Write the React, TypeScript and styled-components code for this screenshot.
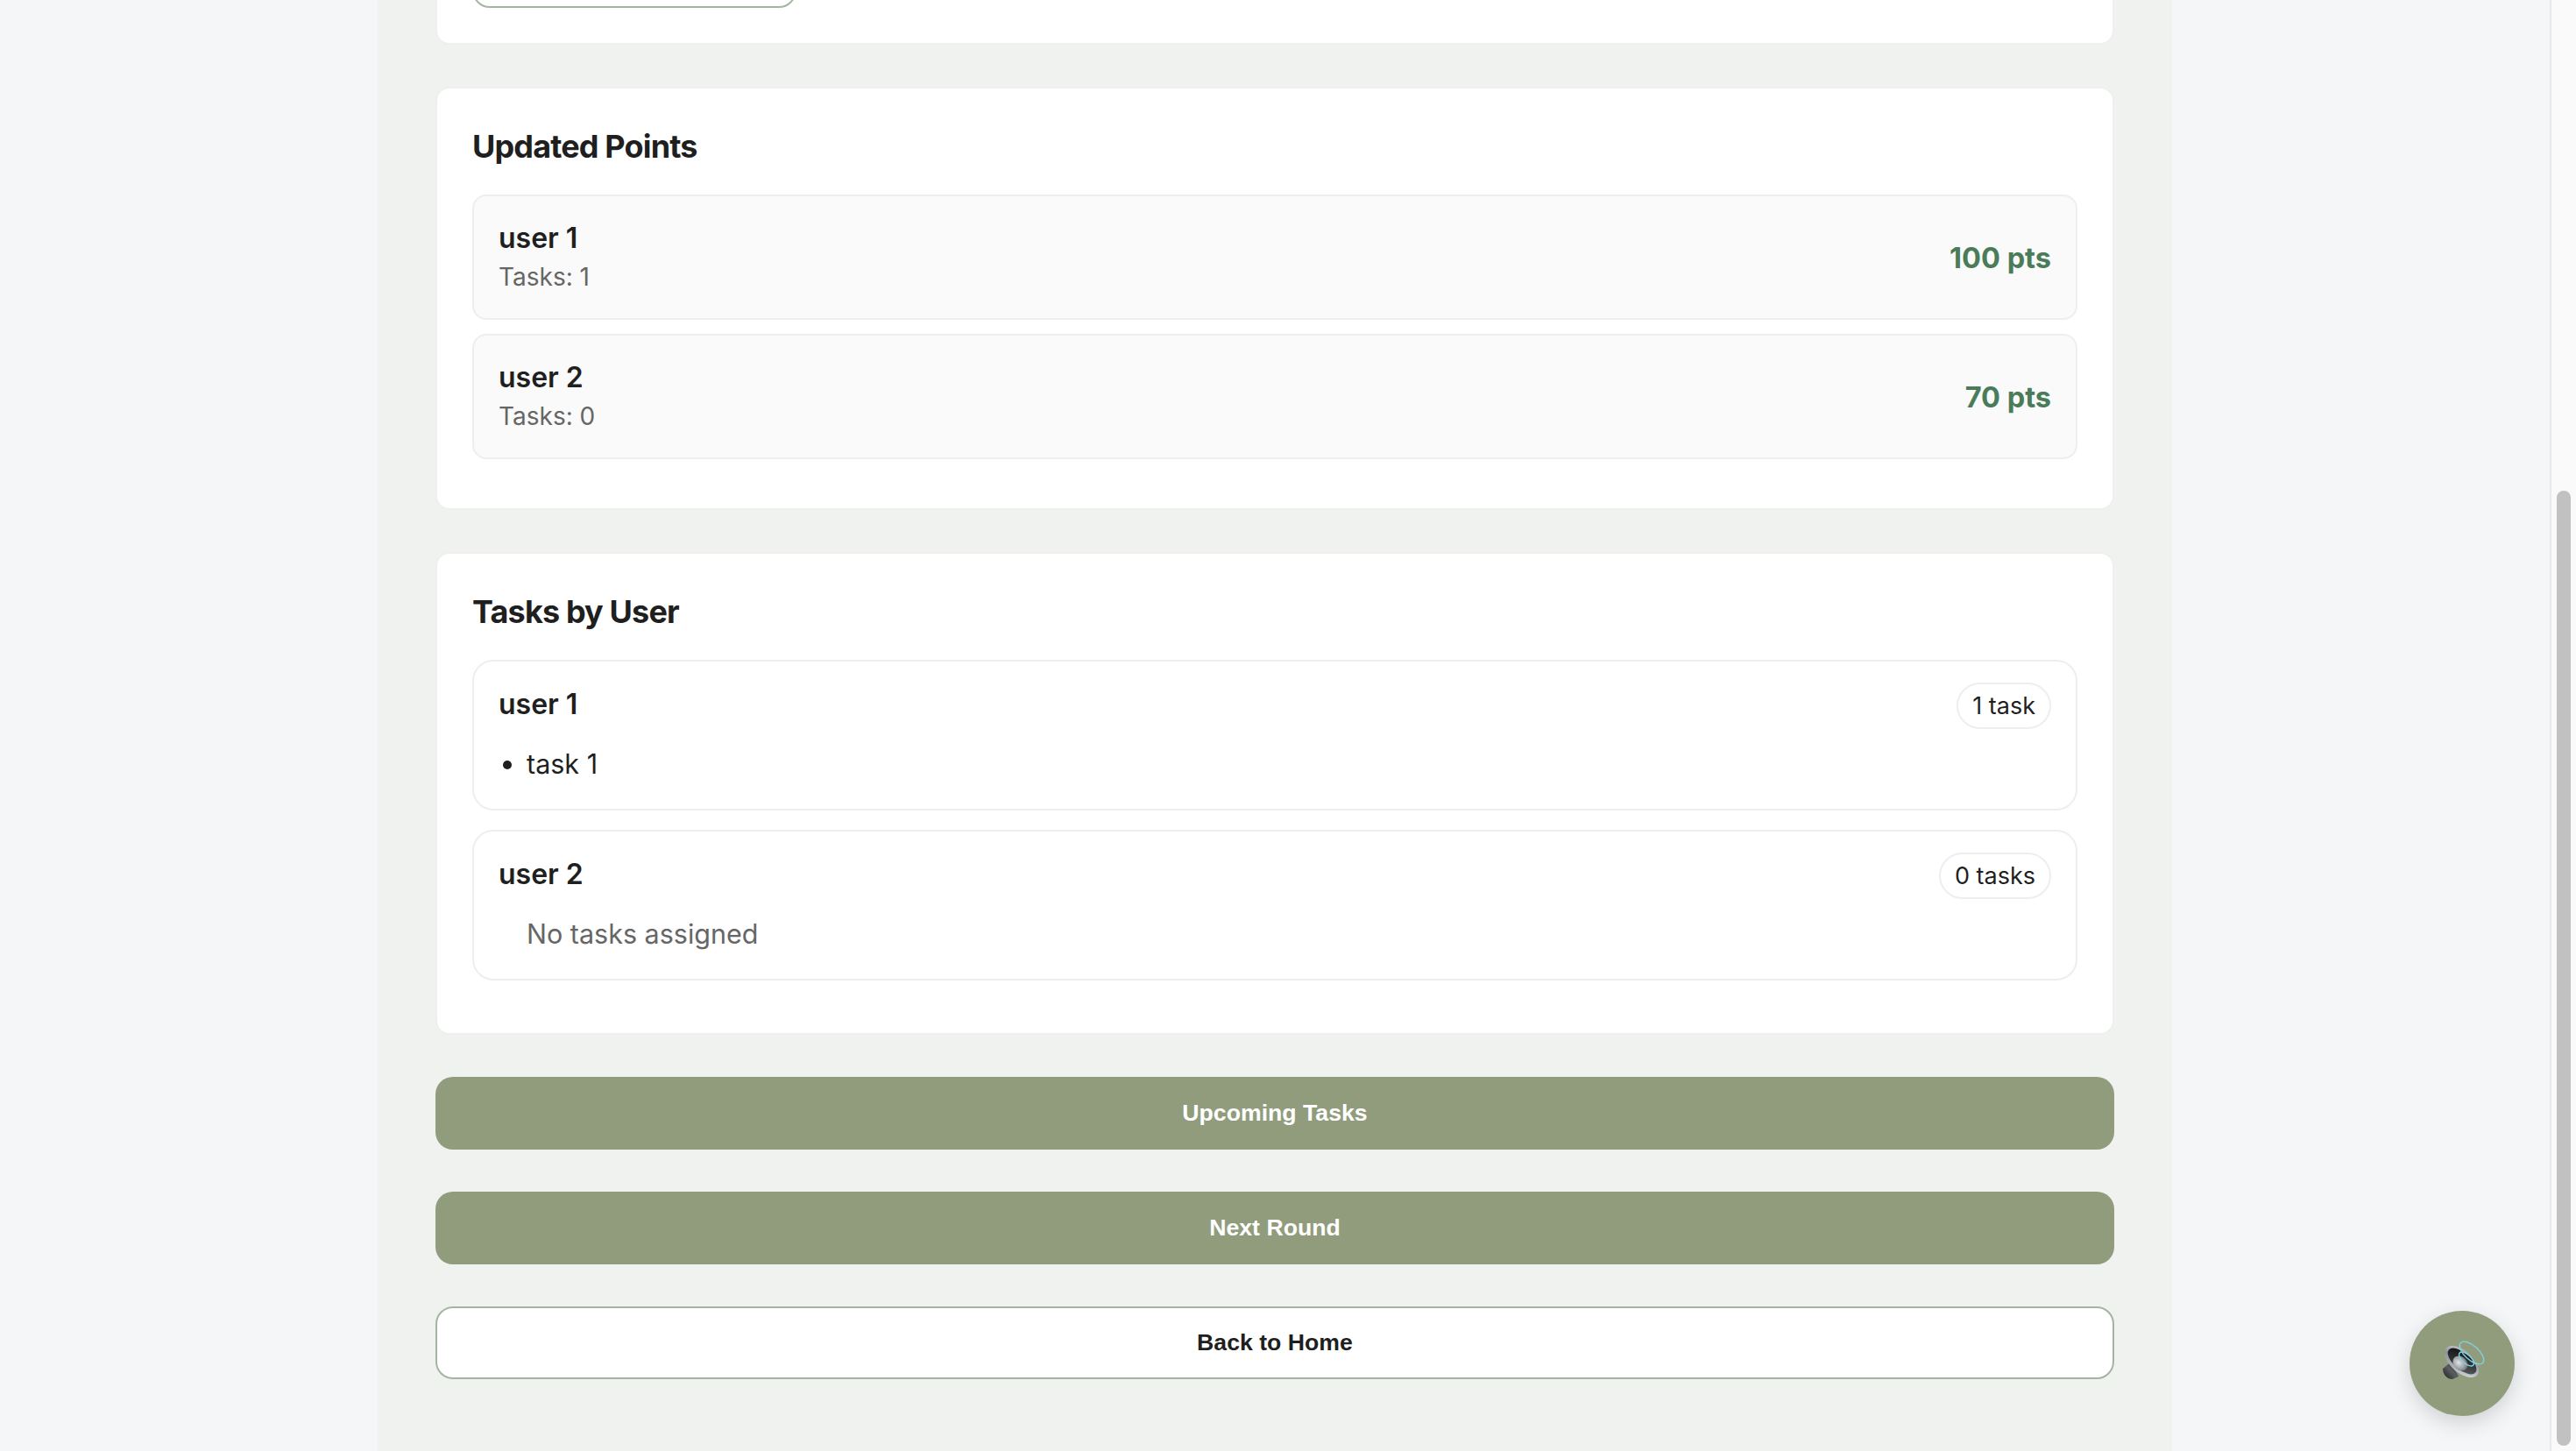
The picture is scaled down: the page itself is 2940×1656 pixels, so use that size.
import React from "react";
import styled, { createGlobalStyle } from "styled-components";

const Global = createGlobalStyle`
  html, body { margin: 0; padding: 0; height: 100%; overflow: hidden; }
  body { font-family: Inter, "Liberation Sans", sans-serif; background: #f4f6f8; color: #1f1f1f; -webkit-font-smoothing: antialiased; }
  * { box-sizing: border-box; }
`;

const Shell = styled.div`
  position: relative;
  display: flex;
  height: 100vh;
  overflow: hidden;
`;

const Viewport = styled.main`
  flex: 1;
  min-width: 0;
  height: 100%;
  display: flex;
  flex-direction: column;
  justify-content: flex-end;
  align-items: center;
  overflow: hidden;
`;

const Container = styled.div`
  width: 2048px;
  flex-shrink: 0;
  padding: 0 66px 82px;
  background: #f0f2ef;
  display: flex;
  flex-direction: column;
  gap: 48px;
`;

const Card = styled.section<{ $bottom: number }>`
  background: #ffffff;
  border: 2px solid #eff0ee;
  border-radius: 16px;
  padding: 40px 40px ${(p) => p.$bottom}px;
`;

const ClippedCard = styled(Card)`
  height: 200px;
  display: flex;
  flex-direction: column;
  justify-content: flex-end;
`;

const OutlineChip = styled.div`
  width: 370px;
  height: 80px;
  border: 2px solid #a3b5a0;
  border-radius: 20px;
  background: #fff;
`;

const CardTitle = styled.h2`
  margin: 0 0 29px;
  font-size: 36px;
  line-height: 52px;
  font-weight: 700;
  letter-spacing: -0.85px;
  color: #1f1f1f;
`;

const List = styled.div<{ $gap: number }>`
  display: flex;
  flex-direction: column;
  gap: ${(p) => p.$gap}px;
`;

const ScoreRow = styled.div`
  display: flex;
  justify-content: space-between;
  align-items: center;
  height: 143px;
  padding: 1px 28px 0;
  background: #fafafa;
  border: 2px solid #eeeeee;
  border-radius: 16px;
`;

const Name = styled.div`
  font-size: 32px;
  line-height: 44px;
  font-weight: 600;
  color: #1f1f1f;
`;

const TaskName = styled(Name)`
  margin-top: 3px;
`;

const Meta = styled.div`
  font-size: 28px;
  line-height: 44px;
  color: #666666;
`;

const Points = styled.div`
  font-size: 32.5px;
  font-weight: 700;
  color: #4a7c59;
`;

const TaskCard = styled.div`
  height: 172px;
  padding: 24px 28px 0;
  background: #fff;
  border: 2px solid #eeeeee;
  border-radius: 24px;
`;

const TaskHead = styled.div`
  display: flex;
  justify-content: space-between;
  align-items: flex-start;
  margin-bottom: 17px;
`;

const Pill = styled.span`
  height: 53px;
  padding: 0 16px;
  display: inline-flex;
  align-items: center;
  border: 2px solid #eeeeee;
  border-radius: 999px;
  font-size: 27px;
  color: #1f1f1f;
`;

const TaskList = styled.ul`
  margin: 0;
  padding: 0 0 0 32px;
  font-size: 30.5px;
  line-height: 46px;
  color: #1f1f1f;
`;

const Empty = styled.div`
  padding-left: 32px;
  font-size: 30.5px;
  line-height: 46px;
  color: #666666;
`;

const Actions = styled.div`
  display: flex;
  flex-direction: column;
  gap: 48px;
`;

const Button = styled.button<{ $outline?: boolean }>`
  width: 100%;
  height: 83px;
  border-radius: 20px;
  border: ${(p) => (p.$outline ? "2px solid #a3b5a0" : "none")};
  background: ${(p) => (p.$outline ? "#ffffff" : "#919c7d")};
  color: ${(p) => (p.$outline ? "#1f1f1f" : "#ffffff")};
  font-family: "Liberation Sans", Arial, sans-serif;
  font-size: 26.67px;
  font-weight: 700;
`;

const Fab = styled.button`
  position: absolute;
  right: 70px;
  bottom: 40px;
  width: 120px;
  height: 120px;
  padding: 0;
  border: none;
  border-radius: 50%;
  background: #919c7d;
  box-shadow: 0 8px 24px rgba(0, 0, 0, 0.15);
  display: flex;
  align-items: center;
  justify-content: center;
`;

const ScrollTrack = styled.div`
  width: 30px;
  flex-shrink: 0;
  height: 100%;
  padding: 560px 6px 6px 6px;
  background: #fafafa;
  border-left: 2px solid #e8e8e8;
`;

const ScrollThumb = styled.div`
  height: 100%;
  background: #c1c1c1;
  border-radius: 8px;
`;

function Speaker() {
  return (
    <svg width="60" height="60" viewBox="0 0 60 60" aria-hidden="true">
      <defs>
        <linearGradient id="rim" x1="0" y1="0" x2="1" y2="1">
          <stop offset="0" stopColor="#e0e3e5" />
          <stop offset="0.35" stopColor="#8d9297" />
          <stop offset="0.7" stopColor="#b0b5b9" />
          <stop offset="1" stopColor="#eceef0" />
        </linearGradient>
        <linearGradient id="mag" x1="0" y1="1" x2="1" y2="0">
          <stop offset="0" stopColor="#1c1c1e" />
          <stop offset="0.5" stopColor="#5b5d60" />
          <stop offset="1" stopColor="#232325" />
        </linearGradient>
        <linearGradient id="cone" x1="0" y1="0" x2="1" y2="1">
          <stop offset="0" stopColor="#0c0c0d" />
          <stop offset="0.5" stopColor="#2e3032" />
          <stop offset="1" stopColor="#62676b" />
        </linearGradient>
        <radialGradient id="cap" cx="0.4" cy="0.55" r="0.65">
          <stop offset="0" stopColor="#e2e5e7" />
          <stop offset="0.7" stopColor="#90969b" />
          <stop offset="1" stopColor="#4c5053" />
        </radialGradient>
      </defs>
      <path d="M8 36 L18 28 L26 45 L19 48 C13 48 8 43 8 36 Z" fill="url(#mag)" />
      <path d="M17 30 L27 22 L36 38 L25 43 Z" fill="#85898d" />
      <ellipse cx="29.5" cy="28" rx="23.5" ry="12.5" transform="rotate(41 29.5 28)" fill="url(#rim)" />
      <ellipse cx="30" cy="27.5" rx="20" ry="9.5" transform="rotate(41 30 27.5)" fill="url(#cone)" />
      <ellipse cx="28" cy="30" rx="9.5" ry="7.5" transform="rotate(41 28 30)" fill="url(#cap)" />
      <g fill="none" stroke="#7fd3de" strokeWidth="1.4">
        <ellipse cx="41" cy="18" rx="17" ry="8" transform="rotate(42 41 18)" />
        <ellipse cx="35" cy="25" rx="10.5" ry="5" transform="rotate(42 35 25)" />
      </g>
    </svg>
  );
}

export default function App() {
  return (
    <>
      <Global />
      <Shell>
        <Viewport>
          <Container>
            <ClippedCard $bottom={40}>
              <OutlineChip />
            </ClippedCard>
            <Card $bottom={56}>
              <CardTitle>Updated Points</CardTitle>
              <List $gap={16}>
                <ScoreRow>
                  <div>
                    <Name>user 1</Name>
                    <Meta>Tasks: 1</Meta>
                  </div>
                  <Points>100 pts</Points>
                </ScoreRow>
                <ScoreRow>
                  <div>
                    <Name>user 2</Name>
                    <Meta>Tasks: 0</Meta>
                  </div>
                  <Points>70 pts</Points>
                </ScoreRow>
              </List>
            </Card>
            <Card $bottom={60}>
              <CardTitle>Tasks by User</CardTitle>
              <List $gap={22}>
                <TaskCard>
                  <TaskHead>
                    <TaskName>user 1</TaskName>
                    <Pill>1 task</Pill>
                  </TaskHead>
                  <TaskList>
                    <li>task 1</li>
                  </TaskList>
                </TaskCard>
                <TaskCard>
                  <TaskHead>
                    <TaskName>user 2</TaskName>
                    <Pill>0 tasks</Pill>
                  </TaskHead>
                  <Empty>No tasks assigned</Empty>
                </TaskCard>
              </List>
            </Card>
            <Actions>
              <Button>Upcoming Tasks</Button>
              <Button>Next Round</Button>
              <Button $outline>Back to Home</Button>
            </Actions>
          </Container>
        </Viewport>
        <ScrollTrack>
          <ScrollThumb />
        </ScrollTrack>
        <Fab aria-label="Toggle sound">
          <Speaker />
        </Fab>
      </Shell>
    </>
  );
}
